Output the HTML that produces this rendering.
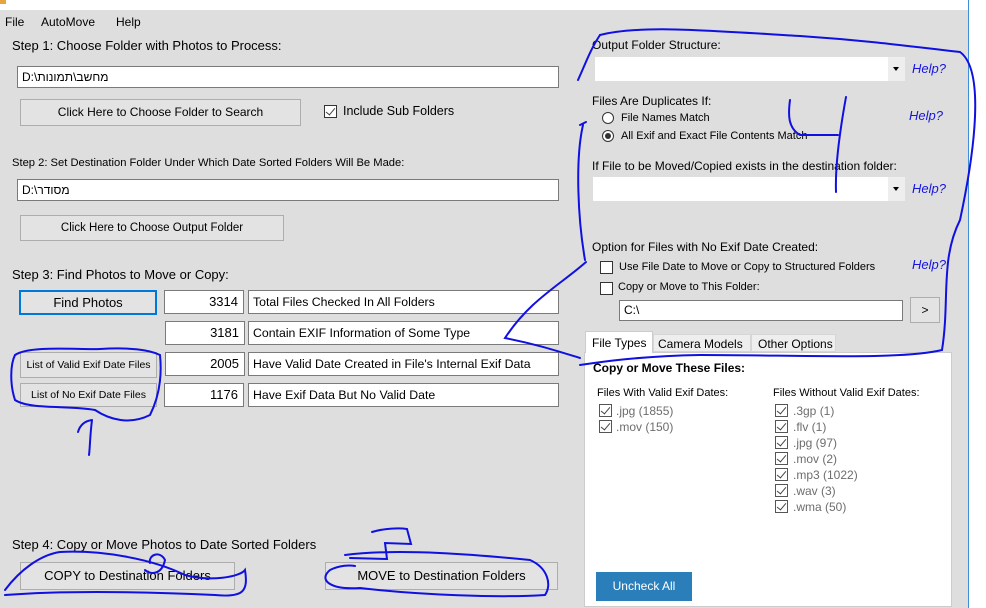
<!DOCTYPE html>
<html><head><meta charset="utf-8"><style>
*{margin:0;padding:0;box-sizing:border-box}
body{width:986px;height:608px;overflow:hidden;background:#fff;font-family:"Liberation Sans","Noto Sans CJK SC",sans-serif;font-size:12px;color:#000;position:relative}
.a{position:absolute;white-space:nowrap}
#win{position:absolute;left:0;top:10px;width:968px;height:598px;background:#dedede}
#bd{position:absolute;left:968px;top:0;width:1px;height:608px;background:#3c8fd8}
.tb{position:absolute;background:#fff;border:1px solid #7a7a7a;padding-left:4px;font-size:13px;line-height:20px}
.btn{position:absolute;background:#e3e3e3;border:1px solid #adadad;text-align:center;font-size:13px}
.cb{position:absolute;width:13px;height:13px;border:1px solid #333;background:#fff}
.cbg{position:absolute;width:13px;height:13px;border:1px solid #555;background:#fff}
.cbg:after,.cb.c:after{content:"";position:absolute;left:3px;top:0px;width:4px;height:8px;border:solid #444;border-width:0 1.5px 1.5px 0;transform:rotate(40deg)}
.help{position:absolute;color:#1515e0;font-style:italic;font-size:13px}
.combo{position:absolute;background:#fff;height:24px}
.combo i{position:absolute;right:0;top:0;width:17px;height:24px;background:#eee}
.combo i:after{content:"";position:absolute;left:5px;top:10px;border:3px solid transparent;border-top:4px solid #000}
.g{color:#6d6d6d}
</style></head><body>
<div class="a" style="left:0;top:0;width:6px;height:4px;background:#e8a33a"></div>
<div id="win"></div><div id="bd"></div>
<div class="a" style="left:5px;top:15px;font-size:12px">File</div>
<div class="a" style="left:41px;top:15px">AutoMove</div>
<div class="a" style="left:116px;top:15px">Help</div>

<div class="a" style="left:12px;top:38px;font-size:13px">Step 1: Choose Folder with Photos to Process:</div>
<div class="tb" style="left:17px;top:66px;width:542px;height:22px;font-size:12px">D:\מחשב\תמונות</div>
<div class="btn" style="left:20px;top:99px;width:281px;height:27px;line-height:25px;font-size:12px">Click Here to Choose Folder to Search</div>
<div class="cb c" style="left:324px;top:105px"></div>
<div class="a" style="left:343px;top:104px;font-size:12.5px">Include Sub Folders</div>

<div class="a" style="left:12px;top:157px;font-size:11.2px">Step 2: Set Destination Folder Under Which Date Sorted Folders Will Be Made:</div>
<div class="tb" style="left:17px;top:179px;width:542px;height:22px;font-size:12px">D:\מסודר</div>
<div class="btn" style="left:20px;top:215px;width:264px;height:26px;line-height:24px;font-size:11.5px">Click Here to Choose Output Folder</div>

<div class="a" style="left:12px;top:267px;font-size:13px">Step 3: Find Photos to Move or Copy:</div>
<div class="btn" style="left:19px;top:290px;width:138px;height:25px;line-height:21px;border:2px solid #0078d7">Find Photos</div>
<div class="btn" style="left:20px;top:352px;width:137px;height:26px;line-height:24px;font-size:10.5px">List of Valid Exif Date Files</div>
<div class="btn" style="left:20px;top:383px;width:137px;height:24px;line-height:22px;font-size:10.5px">List of No Exif Date Files</div>

<div class="tb" style="left:164px;top:290px;width:80px;height:24px;text-align:right;padding-right:5px;line-height:22px">3314</div>
<div class="tb" style="left:248px;top:290px;width:311px;height:24px;line-height:22px;font-size:12.3px">Total Files Checked In All Folders</div>
<div class="tb" style="left:165px;top:321px;width:80px;height:24px;text-align:right;padding-right:5px;line-height:22px">3181</div>
<div class="tb" style="left:248px;top:321px;width:311px;height:24px;line-height:22px;font-size:12.3px">Contain EXIF Information of Some Type</div>
<div class="tb" style="left:165px;top:352px;width:80px;height:24px;text-align:right;padding-right:5px;line-height:22px">2005</div>
<div class="tb" style="left:248px;top:352px;width:311px;height:24px;line-height:22px;font-size:12.3px">Have Valid Date Created in File's Internal Exif Data</div>
<div class="tb" style="left:164px;top:383px;width:80px;height:24px;text-align:right;padding-right:5px;line-height:22px">1176</div>
<div class="tb" style="left:248px;top:383px;width:311px;height:24px;line-height:22px;font-size:12.3px">Have Exif Data But No Valid Date</div>

<div class="a" style="left:12px;top:537px;font-size:13px">Step 4: Copy or Move Photos to Date Sorted Folders</div>
<div class="btn" style="left:20px;top:562px;width:215px;height:28px;line-height:26px">COPY to Destination Folders</div>
<div class="btn" style="left:325px;top:562px;width:233px;height:28px;line-height:26px">MOVE to Destination Folders</div>

<!-- right -->
<div class="a" style="left:592px;top:38px">Output Folder Structure:</div>
<div class="combo" style="left:595px;top:57px;width:310px"><i></i></div>
<div class="help" style="left:912px;top:61px">Help?</div>
<div class="a" style="left:592px;top:94px">Files Are Duplicates If:</div>
<div class="a" style="left:602px;top:112px;width:12px;height:12px;border:1px solid #333;border-radius:50%;background:#fff"></div>
<div class="a" style="left:621px;top:112px;font-size:11px">File Names Match</div>
<div class="a" style="left:602px;top:130px;width:12px;height:12px;border:1px solid #333;border-radius:50%;background:#fff"><div style="position:absolute;left:2px;top:2px;width:6px;height:6px;border-radius:50%;background:#333"></div></div>
<div class="a" style="left:621px;top:130px;font-size:11px">All Exif and Exact File Contents Match</div>
<div class="help" style="left:909px;top:108px">Help?</div>
<div class="a" style="left:592px;top:159px">If File to be Moved/Copied exists in the destination folder:</div>
<div class="combo" style="left:593px;top:177px;width:312px"><i></i></div>
<div class="help" style="left:912px;top:181px">Help?</div>
<div class="a" style="left:592px;top:240px">Option for Files with No Exif Date Created:</div>
<div class="cb" style="left:600px;top:261px"></div>
<div class="a" style="left:619px;top:261px;font-size:11px">Use File Date to Move or Copy to Structured Folders</div>
<div class="cb" style="left:600px;top:282px"></div>
<div class="a" style="left:618px;top:281px;font-size:11px">Copy or Move to This Folder:</div>
<div class="help" style="left:912px;top:257px">Help?</div>
<div class="tb" style="left:619px;top:300px;width:284px;height:21px;font-size:12px;line-height:19px">C:\</div>
<div class="btn" style="left:910px;top:297px;width:30px;height:26px;line-height:24px;font-size:12px">&gt;</div>

<div class="a" style="left:584px;top:352px;width:368px;height:255px;background:#fff;border:1px solid #ccc"></div>
<div class="a" style="left:585px;top:331px;width:68px;height:22px;background:#fff;border:1px solid #ccc;border-bottom:none;padding:4px 0 0 6px;font-size:12px">File Types</div>
<div class="a" style="left:653px;top:334px;width:98px;height:18px;background:#eee;border:1px solid #d6d6d6;padding:2px 0 0 4px">Camera Models</div>
<div class="a" style="left:751px;top:334px;width:85px;height:18px;background:#eee;border:1px solid #d6d6d6;padding:2px 0 0 6px">Other Options</div>
<div class="a" style="left:593px;top:361px;font-weight:bold;font-size:12px">Copy or Move These Files:</div>
<div class="a" style="left:597px;top:387px;font-size:11px">Files With Valid Exif Dates:</div>
<div class="a" style="left:773px;top:387px;font-size:11px">Files Without Valid Exif Dates:</div>
<div class="cbg" style="left:599px;top:404px"></div><div class="a g" style="left:616px;top:404px">.jpg (1855)</div>
<div class="cbg" style="left:599px;top:420px"></div><div class="a g" style="left:616px;top:420px">.mov (150)</div>
<div class="cbg" style="left:775px;top:404px"></div><div class="a g" style="left:793px;top:404px">.3gp (1)</div>
<div class="cbg" style="left:775px;top:420px"></div><div class="a g" style="left:793px;top:420px">.flv (1)</div>
<div class="cbg" style="left:775px;top:436px"></div><div class="a g" style="left:793px;top:436px">.jpg (97)</div>
<div class="cbg" style="left:775px;top:452px"></div><div class="a g" style="left:793px;top:452px">.mov (2)</div>
<div class="cbg" style="left:775px;top:468px"></div><div class="a g" style="left:793px;top:468px">.mp3 (1022)</div>
<div class="cbg" style="left:775px;top:484px"></div><div class="a g" style="left:793px;top:484px">.wav (3)</div>
<div class="cbg" style="left:775px;top:500px"></div><div class="a g" style="left:793px;top:500px">.wma (50)</div>
<div class="a" style="left:596px;top:572px;width:96px;height:29px;background:#2a7fba;color:#fff;text-align:center;line-height:29px;font-size:12px">Uncheck All</div>

<svg class="a" style="left:0;top:0" width="986" height="608" fill="none" stroke="#1010e0" stroke-width="2" stroke-linecap="round">
<path d="M600 35 C640 25 700 30 800 36 C860 40 900 45 960 52 C985 70 975 150 960 220 C940 260 950 300 942 350 C900 360 800 355 700 355 C640 356 600 362 580 365"/>
<path d="M600 35 C590 50 585 65 578 80 M583 125 C575 160 578 220 585 260"/>
<path d="M580 125 L586 122"/>
<path d="M790 100 C788 115 788 128 800 135 L838 135 M846 97 C840 130 835 165 836 192"/>
<path d="M586 262 C560 285 530 300 505 338 C540 345 560 352 580 358"/>
<path d="M15 355 C30 345 80 350 100 349 C130 347 150 350 160 355 C162 375 160 395 150 415 C130 425 110 420 95 410 C70 405 30 410 15 400 C10 385 10 365 15 355"/>
<path d="M92 420 C90 435 90 448 89 455 M78 432 C80 425 85 421 92 420"/>
<path d="M5 590 C20 570 40 555 60 552 C100 550 150 558 185 575 C210 582 240 577 245 570 C248 590 245 598 215 595 C150 592 70 590 5 595 M150 563 C148 555 160 550 165 560 C162 575 150 575 145 570"/>
<path d="M345 555 C400 548 480 555 530 560 C548 568 552 585 545 595 C500 598 420 595 360 588 C330 590 318 580 330 570 C340 565 350 565 355 566"/>
<path d="M372 532 C385 528 400 528 407 529 L411 544 L385 543 L387 559 L350 558"/>
</svg>
</body></html>
